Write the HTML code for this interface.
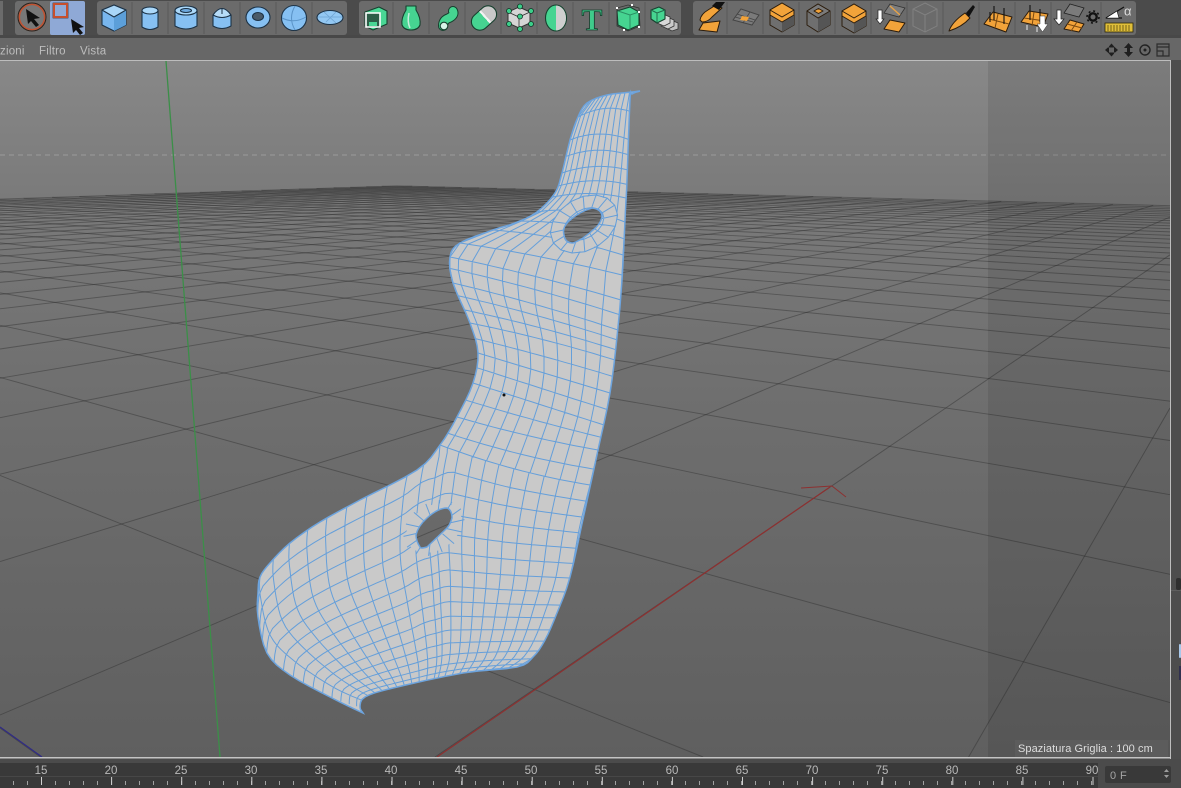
<!DOCTYPE html>
<html lang="it"><head><meta charset="utf-8"><title>Viewport</title>
<style>
html,body{margin:0;padding:0;background:#4b4b4b;width:1181px;height:788px;overflow:hidden}
svg{position:absolute;left:0;top:0;display:block}
text{font-family:"Liberation Sans",sans-serif}
.b{stroke:#1c3246;stroke-width:1.1;stroke-linejoin:round}
.g{stroke:#17402e;stroke-width:1.1;stroke-linejoin:round}
.o{stroke:#2b1c0c;stroke-width:1;stroke-linejoin:round}
.sep{stroke:#5a5a5a;stroke-width:1}
</style></head><body>
<svg width="1181" height="788" viewBox="0 0 1181 788" xmlns="http://www.w3.org/2000/svg">
<defs>
<linearGradient id="sky" x1="0" y1="60" x2="0" y2="200" gradientUnits="userSpaceOnUse"><stop offset="0" stop-color="#888"/><stop offset="1" stop-color="#7a7a7a"/></linearGradient>
<linearGradient id="floor" x1="0" y1="186" x2="0" y2="757" gradientUnits="userSpaceOnUse"><stop offset="0" stop-color="#7a7a7a"/><stop offset=".4" stop-color="#6e6e6e"/><stop offset="1" stop-color="#5f5f5f"/></linearGradient>
<linearGradient id="caps" x1="0" y1="0" x2="1" y2="0"><stop offset=".52" stop-color="#46d491"/><stop offset=".52" stop-color="#f2f2f2"/><stop offset=".6" stop-color="#f2f2f2"/><stop offset=".6" stop-color="#c9c9c9"/></linearGradient>
<pattern id="tk" x="13" y="781" width="14" height="4" patternUnits="userSpaceOnUse"><rect width="1" height="4" fill="#a0a0a0"/></pattern>
<pattern id="tk5" x="41" y="777" width="70.1" height="8" patternUnits="userSpaceOnUse"><rect width="1" height="8" fill="#d0d0d0"/></pattern>
<clipPath id="seatclip"><path id="seatclipPath" clip-rule="evenodd" d=""/></clipPath>
<filter id="soft" x="0" y="0" width="1181" height="788" filterUnits="userSpaceOnUse"><feGaussianBlur stdDeviation=".3"/></filter>
<g id="ocube"><path d="M0-14 12-7V8L0 15-12 8V-7Z" fill="#6f6f6f" class="o"/><path d="M0 4V15L12 8V-3Z" fill="#555"/><path d="M0-14 12-7V-2L0 5-12-2V-7Z" fill="#f2a33a" class="o"/><path d="M-12-7 0 0 12-7" fill="none" class="o"/></g>
</defs>

<!-- chrome -->
<rect width="1181" height="788" fill="#4b4b4b"/>
<rect x="0" y="38" width="1181" height="22" fill="#676767"/>
<rect x="0" y="35" width="1181" height="3" fill="#484848"/>
<rect x="0" y="1" width="3" height="34" fill="#6b6b6b"/>
<rect x="15" y="1" width="70" height="34" rx="3" fill="#6d6d6d"/>
<rect x="50" y="1" width="35" height="34" rx="2" fill="#8fa9d6"/>
<rect x="97" y="1" width="250" height="34" rx="3" fill="#6b6b6b"/>
<rect x="359" y="1" width="322" height="34" rx="3" fill="#6b6b6b"/>
<rect x="693" y="1" width="443" height="34" rx="3" fill="#6b6b6b"/>
<path class="sep" d="M132 2V34M168 2V34M204 2V34M240 2V34M276 2V34M312 2V34M393 2V34M429 2V34M465 2V34M501 2V34M537 2V34M573 2V34M609 2V34M645 2V34M727 2V34M763 2V34M799 2V34M835 2V34M871 2V34M907 2V34M943 2V34M979 2V34M1015 2V34M1051 2V34M1101 2V34"/>

<!-- group 1 -->
<circle cx="32" cy="17" r="14" fill="#777" stroke="#2e2018" stroke-width="1"/>
<circle cx="32" cy="17" r="12.6" fill="none" stroke="#c4512f" stroke-width="1.4"/>
<path d="M26 9 40 18 34 19 39 25 36 27 31 21 28 24Z" fill="#111"/>
<rect x="53" y="3" width="15" height="15" fill="#8fa9d6" stroke="#2a1a14" stroke-width=".6"/>
<rect x="54" y="4" width="13" height="13" fill="none" stroke="#c64f2d" stroke-width="2"/>
<path d="M71 19 84 27 79 28 83 33 80 35 76 30 73 33Z" fill="#111"/>

<!-- group 2: blue primitives -->
<path d="M114 5 126 10V25L114 31 102 25V10Z" fill="#78b6ee" class="b"/><path d="M114 18V31L126 25V10Z" fill="#5c9fd9"/><path d="M114 5 126 10 114 17 102 10Z" fill="#a9d6f8" class="b"/>
<path d="M142 11V27Q150 32 158 27V11Z" fill="#86c0f2" class="b"/><ellipse cx="150" cy="10.500" rx="8" ry="3.500" fill="#abd8f9" class="b"/>
<path d="M175 11V26Q186 32 197 26V11Z" fill="#86c0f2" class="b"/><ellipse cx="186" cy="10.500" rx="11" ry="4.500" fill="#abd8f9" class="b"/><ellipse cx="186" cy="10.500" rx="5.500" ry="2" fill="#6ea9de" class="b"/>
<path d="M213 15V26Q222 31 231 26V15Z" fill="#86c0f2" class="b"/><path d="M213 15Q222 2 231 15 222 20 213 15Z" fill="#b6dcf8" class="b"/><path d="M222 8V14" stroke="#1c3246"/>
<ellipse cx="258" cy="17.500" rx="12" ry="10.500" fill="#86c0f2" class="b"/><ellipse cx="258" cy="16.500" rx="5.500" ry="4" fill="#4a5a68" class="b"/>
<circle cx="294" cy="18" r="12.500" fill="#86c0f2" class="b"/><path d="M282 18Q294 24 306 17M295 6Q288 18 295 30" fill="none" stroke="#5a93c7"/>
<ellipse cx="330" cy="17.500" rx="13" ry="7" fill="#93c8f3" class="b"/><path d="M318 17H342M324 12 336 23M336 12 326 22" stroke="#6ea4d4" fill="none" stroke-width=".8"/>

<!-- group 3: green -->
<path d="M365 12 379 7 387 11V24L373 30 365 26Z" fill="#49d795" class="g"/><path d="M366 13H380V27H366Z" fill="#2d5e48" stroke="#fff" stroke-width="1.600"/><path d="M369 22H377V26H369Z" fill="#49d795"/>
<path d="M406 6H416V10Q421 18 420 25 418 30 411 30 404 30 402 25 401 18 406 10Z" fill="#46d491" class="g"/><path d="M409 13Q407 22 410 28" stroke="#c8eedd" fill="none" stroke-width="1.500"/>
<path d="M443 26Q443 20 449 18 455 15 453 11" fill="none" stroke="#17402e" stroke-width="10" stroke-linecap="round"/><path d="M443 26Q443 20 449 18 455 15 453 11" fill="none" stroke="#46d491" stroke-width="8" stroke-linecap="round"/><circle cx="444" cy="26" r="3.800" fill="#d8f3e7" class="g"/>
<rect x="470" y="9.500" width="28" height="17" rx="8.500" transform="rotate(-42 484 18)" fill="url(#caps)" class="g"/>
<path d="M519 7 530 12V23L519 28 508 23V12Z" fill="#d5d5d5" stroke="#333"/><path d="M508 12 519 17 530 12M519 17V28" fill="none" stroke="#333" stroke-width=".8"/>
<g fill="#3bcf8a" stroke="#123425" stroke-width=".8"><circle cx="520" cy="6.500" r="2.500"/><circle cx="531" cy="11" r="2.500"/><circle cx="531" cy="24" r="2.500"/><circle cx="520" cy="29" r="2.500"/><circle cx="509" cy="24" r="2.500"/><circle cx="509" cy="11" r="2.500"/><circle cx="520" cy="16.500" r="2.500"/></g>
<ellipse cx="556" cy="18" rx="10.500" ry="13" fill="#46d491" class="g"/><path d="M556 5.500A10 12.500 0 0 1 556 30.500Z" fill="#cfcfcf"/>
<text x="592" y="30" text-anchor="middle" font-size="31" font-weight="bold" style="font-family:'Liberation Serif',serif" fill="#3fcb8b" stroke="#15392a" stroke-width=".8">T</text>
<path d="M617 11 630 7 639 12V25L628 30 618 25Z" fill="#46d491" class="g"/><path d="M618 11 630 15 639 12M630 15V30" stroke="#2a8e62" fill="none"/><path d="M617 8 628 5 639 8 640 26 628 31 617 26Z" fill="none" stroke="#333" stroke-width=".8"/><g fill="#fff"><rect x="616" y="7" width="2" height="2"/><rect x="631" y="4" width="2" height="2"/><rect x="638" y="11" width="2" height="2"/><rect x="638" y="26" width="2" height="2"/><rect x="623" y="29" width="2" height="2"/></g>
<g stroke="#333" stroke-width=".8"><path d="M671 20 678 23V29L672 31 666 28Z" fill="#c0c0c0"/><path d="M667 17 674 20V26L668 29 661 26Z" fill="#cbcbcb"/><path d="M663 14 670 17V23L664 26 657 23Z" fill="#d8d8d8"/></g>
<path d="M651 10 659 7 665 10V19L657 23 651 19Z" fill="#46d491" class="g"/><path d="M651 10 657 13 665 10M657 13V23" fill="none" stroke="#236b4c"/>

<!-- group 4: orange -->
<path d="M700 20Q701 14 708 10L716 5 722 8 712 17Q708 22 702 22Z" fill="#f2a33a" class="o"/><path d="M712 6 716 2H725L719 10Z" fill="#111"/><path d="M703 23 720 21 717 32 699 30Z" fill="#f2a33a" class="o"/>
<path d="M733 20 741 9 759 15 752 25Z" fill="#7a7a7a" stroke="#444"/><path d="M737 14 755 20M743 23 750 12M735 17 753 22" stroke="#444" fill="none" stroke-width=".7"/><path d="M742 16 749 17 747 21 740 20Z" fill="#f2a33a"/>
<use href="#ocube" x="782" y="17"/>
<path d="M818 4 830 11V25L818 32 807 25V11Z" fill="#6f6f6f" class="o"/><path d="M818 18V32L830 25V11Z" fill="#555"/><path d="M807 11 818 18 830 11 818 4Z" fill="#7b7b7b" class="o"/><path d="M814 11 818.500 8.500 823 11 818.500 13.500Z" fill="#f2a33a" class="o"/>
<use href="#ocube" x="854" y="18"/>
<path d="M878 10H882V19H884L880 24 876 19H878Z" fill="#fff" stroke="#222" stroke-width=".7"/><path d="M890 4 905 8 899 17 884 13Z" fill="#7d7d7d" stroke="#333" stroke-width=".8"/><path d="M890 6 900 15" stroke="#e8a245" stroke-width="1.400"/><path d="M890 20 905 23 899 32 884 29Z" fill="#f2a33a" class="o"/>
<g fill="none" stroke="#818181"><path d="M925 3 937 9V26L925 32 913 26V9Z"/><path d="M913 9 925 15 937 9M925 15V32"/></g>
<path d="M949 31Q952 22 965 13L970 18Q962 27 949 31Z" fill="#f2a33a" class="o"/><path d="M966 13 973 5 975 7 969 17Z" fill="#111"/>
<path d="M984 24 993 12 1012 17 1006 32Z" fill="#f2a33a" class="o"/><path d="M998 14 995 28M989 19 1009 24" stroke="#7c4a10" fill="none"/><path d="M994 6V20M1004 8V24M990 12V22" stroke="#111" stroke-width="1.100"/>
<path d="M1021 22 1029 11 1048 14 1043 27Z" fill="#f2a33a" class="o"/><path d="M1034 12 1032 26M1024 18 1045 21" stroke="#7c4a10" fill="none"/><path d="M1030 5V20M1040 9V22" stroke="#111" stroke-width="1.100"/><path d="M1027 25V30M1037 27V32" stroke="#eee"/>
<path d="M1040 16H1045V24H1048L1042.500 32 1037 24H1040Z" fill="#fff" stroke="#333" stroke-width=".5"/>
<path d="M1057 10H1061V19H1064L1059 25 1054 19H1057Z" fill="#fff" stroke="#222" stroke-width=".7"/>
<path d="M1070 4 1084 8 1079 17 1064 13Z" fill="#7b7b7b" stroke="#222" stroke-width=".8"/>
<path d="M1070 20 1084 24 1079 32 1064 29Z" fill="#f2a33a" class="o"/><path d="M1067 24 1082 28M1077 22 1071 31" stroke="#7c4a10" fill="none"/>
<circle cx="1093" cy="17" r="3.700" fill="none" stroke="#111" stroke-width="2.400"/><circle cx="1093" cy="17" r="6" fill="none" stroke="#111" stroke-width="1.600" stroke-dasharray="2 2.700"/>
<path d="M1106 18 1124 7M1106 18H1122" stroke="#111" stroke-width="1.300" fill="none"/><path d="M1106 18 1117 11 1119 18Z" fill="#fff" stroke="#111" stroke-width=".6"/><text x="1124" y="15.500" font-size="13" fill="#dcdcdc">α</text>
<rect x="1105" y="23" width="28" height="9" fill="#e0bf3a" stroke="#2c2608" stroke-width=".8"/><path d="M1108 25V31M1111 25V31M1114 25V31M1117 25V31M1120 25V31M1123 25V31M1126 25V31M1129 25V31" stroke="#5a4a10" stroke-width=".8"/>

<!-- menu bar -->
<text x="0" y="54.500" font-size="11.500" fill="#bdbdbd" letter-spacing=".2">zioni</text>
<text x="39" y="54.500" font-size="11.500" fill="#bdbdbd" letter-spacing=".2">Filtro</text>
<text x="80" y="54.500" font-size="11.500" fill="#bdbdbd" letter-spacing=".2">Vista</text>
<g fill="#1f1f1f"><path d="M1105 50 1109 46.500V53.500ZM1118 50 1114 46.500V53.500ZM1111.500 43.500 1108 47.500H1115ZM1111.500 56.500 1108 52.500H1115Z"/><path d="M1128.500 43 1124 48H1127V52H1124L1128.500 57 1133 52H1130V48H1133Z"/></g>
<circle cx="1145" cy="50" r="5" fill="none" stroke="#222" stroke-width="1.400"/><circle cx="1145" cy="50" r="1.500" fill="#222"/>
<path d="M1157 44H1169V56H1157ZM1157 47H1169M1157 51H1163V56" fill="none" stroke="#2c2c2c" stroke-width="1.200"/>

<!-- viewport -->
<rect x="0" y="60" width="1170" height="698" fill="url(#sky)"/>
<path d="M0 155H1170" stroke="#a8a8a8" stroke-width="1" stroke-dasharray="5 4" opacity=".7"/>
<path d="M0 199.300L390 186 1170 206.300V757H0Z" fill="url(#floor)"/>
<path id="gridA" d="" fill="none" stroke="#2a2a2a" stroke-opacity=".42" stroke-width=".95"/>
<path id="gridB" d="" fill="none" stroke="#2a2a2a" stroke-opacity=".42" stroke-width=".95"/>
<path d="M0 727 42 757" stroke="#2f2a86" stroke-width="1.200"/>
<path d="M437 757 830 487" stroke="#8d3030" stroke-width="1.200" fill="none"/>
<path d="M801 488 832 486 846 497" stroke="#8d3030" stroke-width="1" fill="none"/>
<path d="M166 61 220 757" stroke="#3b8f48" stroke-width="1.300"/>
<rect x="988" y="61" width="182" height="696" fill="#000" opacity=".085"/>

<!-- seat -->
<g filter="url(#soft)">
<path id="seatFill" d="" fill="#c9c9c9" fill-rule="evenodd"/>
<g clip-path="url(#seatclip)"><path id="mesh" d="" fill="none" stroke="#659fda" stroke-width="1"/>
<ellipse cx="434" cy="528" rx="30" ry="22" transform="rotate(-34 434 528)" fill="#c9c9c9"/>
<ellipse cx="584" cy="224" rx="35" ry="25" transform="rotate(-30 584 224)" fill="#c9c9c9"/>
<path id="meshHoles" d="" fill="none" stroke="#659fda" stroke-width="1"/></g>
<path id="seatLine" d="" fill="none" stroke="#6da4de" stroke-width="1.500"/>
</g>
<circle cx="504" cy="395" r="1.500" fill="#111"/>

<rect x="1015" y="740" width="153" height="17" fill="#5e5e5e" opacity=".8"/>
<text x="1018" y="752" font-size="11" fill="#dedede" letter-spacing=".08">Spaziatura Griglia : 100 cm</text>
<rect x="0" y="60" width="1170" height="1" fill="#bdbdbd"/>
<rect x="1170" y="60" width="1" height="699" fill="#bdbdbd"/>
<rect x="0" y="757" width="1171" height="1.500" fill="#c4c4c4"/>

<!-- timeline -->
<rect x="0" y="759" width="1181" height="4" fill="#4b4b4b"/>
<rect x="0" y="763" width="1098" height="25" fill="#393939"/>
<rect x="0" y="776" width="1098" height="1" fill="#474747"/>
<rect x="0" y="781" width="1098" height="4" fill="url(#tk)"/>
<rect x="0" y="777" width="1098" height="8" fill="url(#tk5)"/>
<g font-size="11.500" fill="#b9b9b9" text-anchor="middle">
<text x="41" y="774">15</text><text x="111" y="774">20</text><text x="181" y="774">25</text><text x="251" y="774">30</text><text x="321" y="774">35</text><text x="391" y="774">40</text><text x="461" y="774">45</text><text x="531" y="774">50</text><text x="601" y="774">55</text><text x="672" y="774">60</text><text x="742" y="774">65</text><text x="812" y="774">70</text><text x="882" y="774">75</text><text x="952" y="774">80</text><text x="1022" y="774">85</text><text x="1092" y="774">90</text>
</g>
<rect x="1098" y="763" width="83" height="25" fill="#4b4b4b"/>
<rect x="1105" y="766" width="66" height="17" rx="2" fill="#393939"/>
<text x="1110" y="779" font-size="11" fill="#a5a5a5" letter-spacing=".4">0 F</text>
<path d="M1164 772 1166.500 769 1169 772ZM1164 775 1166.500 778 1169 775Z" fill="#9c9c9c"/>

<!-- right edge panel -->
<rect x="1171" y="60" width="10" height="699" fill="#4d4d4d"/>
<rect x="1176" y="578" width="5" height="12" rx="2" fill="#2f2f2f"/>
<rect x="1171" y="590" width="10" height="1" fill="#5e5e5e"/>
<rect x="1179" y="644" width="2" height="14" rx="1" fill="#a9c8ea"/>
<rect x="1179" y="666" width="2" height="14" fill="#30304e"/>
</svg>
<script>
(function(){
function $(i){return document.getElementById(i)}
var O=[233,895],VX=[1316,155],VZ=[-800,155],ua=.385,ub=.31,Na=34,Nb=32;
function P(a,b){var d=1+a+b;return [(O[0]+a*VX[0]+b*VZ[0])/d,(O[1]+a*VX[1]+b*VZ[1])/d]}
function f(p){return p[0].toFixed(1)+' '+p[1].toFixed(1)}
function seg(p,q){var t0=0,t1=1,dx=q[0]-p[0],dy=q[1]-p[1],c=[[-dx,p[0]-0],[dx,1170-p[0]],[-dy,p[1]-61],[dy,757-p[1]]];
 for(var i=0;i<4;i++){var e=c[i][0],g=c[i][1];if(e===0){if(g<0)return ''}else{var r=g/e;if(e<0){if(r>t1)return '';if(r>t0)t0=r}else{if(r<t0)return '';if(r<t1)t1=r}}}
 return 'M'+f([p[0]+t0*dx,p[1]+t0*dy])+'L'+f([p[0]+t1*dx,p[1]+t1*dy])}
var A='',B='',i,j,m=0.04;
for(i=-Na;i<=Na;i++){var a=i*ua,bmax=Nb*ub,bmin=Math.max(-Nb*ub,-(1+a)+m);
 if(bmin<bmax)A+=seg(P(a,bmin),P(a,bmax));}
for(i=-Nb;i<=Nb;i++){var b=i*ub,amax=Na*ua,amin=Math.max(-Na*ua,-(1+b)+m);
 if(amin<amax)B+=seg(P(amin,b),P(amax,b));}
$('gridA').setAttribute('d',A);$('gridB').setAttribute('d',B);

function cr(p,q,r,s,t){var t2=t*t,t3=t2*t;function c(k){return .5*(2*q[k]+(r[k]-p[k])*t+(2*p[k]-5*q[k]+4*r[k]-s[k])*t2+(3*q[k]-p[k]-3*r[k]+s[k])*t3)}return [c(0),c(1)]}
function at(arr,i,t){var n=arr.length;return cr(arr[Math.max(i-1,0)],arr[i],arr[Math.min(i+1,n-1)],arr[Math.min(i+2,n-1)],t)}
function smooth(arr,st){var o=[],i,k;for(i=0;i<arr.length-1;i++)for(k=0;k<st;k++)o.push(at(arr,i,k/st));o.push(arr[arr.length-1]);return o}
function path(a){return 'M'+a.map(f).join('L')}
function curve(poly){var s=smooth(poly,10),L=[0],i;for(i=1;i<s.length;i++)L.push(L[i-1]+Math.hypot(s[i][0]-s[i-1][0],s[i][1]-s[i-1][1]));
 var T=L[L.length-1];return function(t){var d=Math.max(0,Math.min(1,t))*T,k=1;while(k<s.length-1&&L[k]<d)k++;var w=(d-L[k-1])/((L[k]-L[k-1])||1);return [s[k-1][0]+w*(s[k][0]-s[k-1][0]),s[k-1][1]+w*(s[k][1]-s[k-1][1])]}}

// outline
var out=[[640,91],[632,92],[607,95],[587,103],[578,117],[570,140],[562,173],[555,193],[537,212],[515,223],[493,230],[460,243],[450,257],[453,283],[470,323],[478,353],[473,383],[457,417],[440,445],[417,470],[360,500],[320,522],[290,543],[270,563],[260,577],[258,593],[258,617],[267,653],[290,675],[330,697],[363,713]];
var out2=[[363,713],[360,707],[365,697],[393,688],[463,673],[517,667],[533,657],[545,640],[557,613],[570,577],[585,510],[598,450],[610,393],[617,337],[622,280],[625,220],[627,180],[630,100],[632,94],[640,91]];
var ol=smooth(out,4).concat(smooth(out2,4));
var seat=path(ol)+'Z';
var h1='M447 508Q452 510 452 518Q450 525 447 528L427 547Q420 549 420 547Q416 541 416 535Q418 526 427 518Q438 508 447 508Z';
var h2='M592 208Q602 209 602 217Q600 225 593 230Q582 240 573 243Q565 243 564 235Q562 228 568 222Q578 212 592 208Z';
$('seatFill').setAttribute('d',seat+h1+h2);
$('seatclipPath').setAttribute('d',seat+h1+h2);
$('seatLine').setAttribute('d',seat+h1+h2);

// upper body: left, right, bow, sub rows
var S=[
[[590,101],[634,92],[0,-3],1],
[[578,117],[632,112],[0,-6],1],
[[570,140],[630,140],[0,-6],2],
[[562,173],[628,170],[0,-5],2],
[[553,197],[626,198],[0,-4],1],
[[537,212],[625,222],[0,-6],2],
[[493,230],[623,255],[0,-4],1],
[[460,243],[622,275],[0,-2],1],
[[450,257],[621,300],[0,-2],2],
[[453,283],[618,330],[0,-2],3],
[[470,323],[615,360],[0,-2],2],
[[478,353],[610,393],[0,0],2],
[[473,383],[604,425],[0,0],2],
[[457,417],[598,450],[0,2],2],
[[440,445],[590,485],[0,4],1]];
var Ls=S.map(function(s){return s[0]}),Rs=S.map(function(s){return s[1]}),Bs=S.map(function(s){return s[2]});
var rows=[];
for(i=0;i<S.length-1;i++){var sub=S[i][3];for(j=0;j<sub;j++){var t=j/sub;
 var bw=[Bs[i][0]+(Bs[i+1][0]-Bs[i][0])*t,Bs[i][1]+(Bs[i+1][1]-Bs[i][1])*t];
 rows.push([at(Ls,i,t),at(Rs,i,t),bw]);}}
rows.push([Ls[Ls.length-1],Rs[Rs.length-1],Bs[Bs.length-1]]);
function pt(r,u){var k=4*u*(1-u);return [r[0][0]+u*(r[1][0]-r[0][0])+k*r[2][0],r[0][1]+u*(r[1][1]-r[0][1])+k*r[2][1]]}
var M='',U=[0,.05,.13,.22,.31,.4,.5,.6,.7,.8,.9,1];
rows.forEach(function(r){var a=[];for(var k=0;k<=20;k++)a.push(pt(r,k/20));M+=path(a)});
U.forEach(function(u){M+=path(rows.map(function(r){return pt(r,u)}))});

// seat pan: Coons patch with a rounded top corner
var tOut=curve([[258,600],[260,577],[270,563],[290,543],[320,522],[360,500],[417,470],[440,445]]);
var tAcr=curve([[440,445],[515,469],[590,485]]);
var Lc=curve([[258,600],[258,617],[267,653],[290,675],[330,697],[362,708]]);
var Rc=curve([[590,485],[580,525],[570,577],[557,613],[545,640],[533,657],[517,667]]);
var Bc=curve([[362,708],[365,697],[393,688],[463,673],[517,667]]);
function Traw(s){return s<.5?tOut(s/.5):tAcr((s-.5)/.5)}
function T(s){var d=.09*Math.max(0,1-Math.abs(s-.5)/.16);if(d===0)return Traw(s);var x=0,y=0,n=9;for(var q=0;q<n;q++){var p=Traw(s-d+2*d*q/(n-1));x+=p[0];y+=p[1]}return [x/n,y/n]}
var P00=[258,600],P10=[590,485],P01=[362,708],P11=[517,667];
function C(s,v){var o=[],k;var tp=T(s),bt=Bc(s),lf=Lc(v),rg=Rc(v);for(k=0;k<2;k++)o[k]=(1-v)*tp[k]+v*bt[k]+(1-s)*lf[k]+s*rg[k]-((1-s)*(1-v)*P00[k]+s*(1-v)*P10[k]+(1-s)*v*P01[k]+s*v*P11[k]);return o}
var cols=[],rowsV=[],NR=15,NO=11;
for(i=1;i<NO;i++)cols.push(i/NO*.5);
U.forEach(function(u){cols.push(.5+.5*u)});
for(i=1;i<=NR;i++){rowsV.push(1-Math.pow(1-i/NR,1.25))}
rowsV.forEach(function(v){var a=[];for(var k=0;k<=50;k++)a.push(C(k/50,v));M+=path(a)});
cols.forEach(function(s){var a=[Traw(s)];for(var k=0;k<=30;k++)a.push(C(s,k/30));M+=path(a)});
$('mesh').setAttribute('d',M);

// radial structure round the holes
function ell(c,rx,ry,rot,th){var x=rx*Math.cos(th),y=ry*Math.sin(th),cs=Math.cos(rot),sn=Math.sin(rot);return [c[0]+x*cs-y*sn,c[1]+x*sn+y*cs]}
function hole(c,rx,ry,rot,RX,RY,n,ring){var s='',a=[],b=[];for(var q=0;q<n;q++){var th=q/n*Math.PI*2;
 s+=path([ell(c,rx,ry,rot,th),ell(c,RX,RY,rot,th)]);}
 if(ring){for(q=0;q<=n;q++){var tt=q/n*Math.PI*2;a.push(ell(c,rx*1.55,ry*1.75,rot,tt));b.push(ell(c,RX,RY,rot,tt))}s+=path(a)+path(b)}
 return s}
var H=hole([434,528],16,10,-.62,33,25,14,false)+hole([584,224],14,8,-.55,36,26,16,true);
$('meshHoles').setAttribute('d',H);
})();
</script>
</body></html>
